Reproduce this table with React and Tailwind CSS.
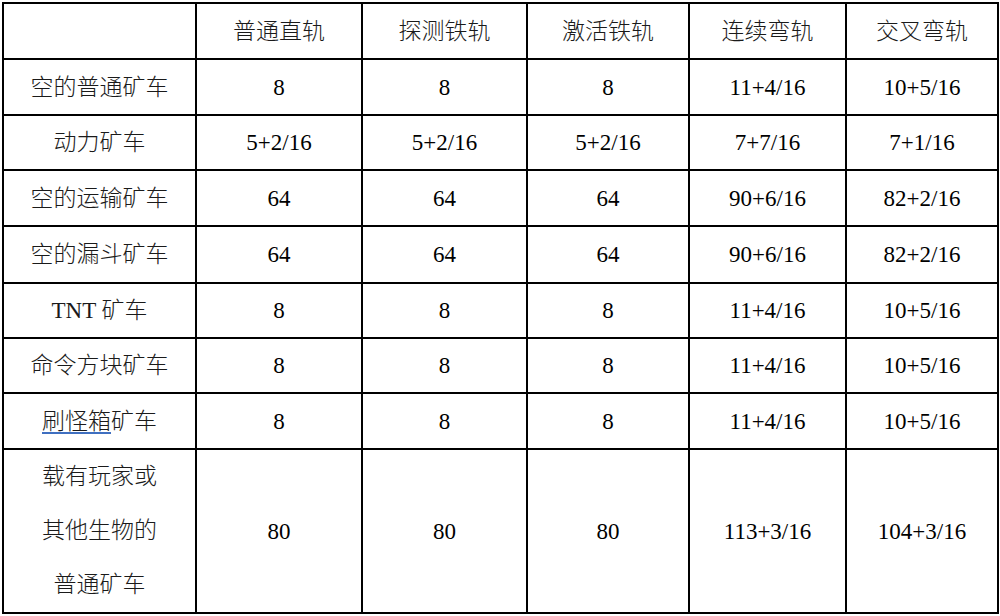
const cols = ["普通直轨", "探测铁轨", "激活铁轨", "连续弯轨", "交叉弯轨"];
const widths = ["w-[193px]", "w-[166px]", "w-[165px]", "w-[162px]", "w-[157px]", "w-[152px]"];

const cell = "border-2 border-black align-middle font-['Liberation_Serif','Noto_Sans_CJK_SC',serif]";
const cn = "font-light text-[#1a1a1a]";

const rows = [
  { label: "空的普通矿车", values: ["8", "8", "8", "11+4/16", "10+5/16"], h: "h-[56px]" },
  { label: "动力矿车", values: ["5+2/16", "5+2/16", "5+2/16", "7+7/16", "7+1/16"], h: "h-[55px]" },
  { label: "空的运输矿车", values: ["64", "64", "64", "90+6/16", "82+2/16"], h: "h-[56px]" },
  { label: "空的漏斗矿车", values: ["64", "64", "64", "90+6/16", "82+2/16"], h: "h-[57px]" },
  { label: "TNT 矿车", values: ["8", "8", "8", "11+4/16", "10+5/16"], h: "h-[55px]" },
  { label: "命令方块矿车", values: ["8", "8", "8", "11+4/16", "10+5/16"], h: "h-[55px]" },
  {
    label: (
      <>
        <span className="underline decoration-[#3f6fc0] decoration-[1.5px] underline-offset-[3px]">刷怪箱</span>矿车
      </>
    ),
    values: ["8", "8", "8", "11+4/16", "10+5/16"],
    h: "h-[56px]",
  },
];

export default function App() {
  return (
    <div className="w-[1000px] h-[616px] bg-white pt-[2px] pl-[2px] text-black font-['Liberation_Serif','Noto_Sans_CJK_SC',serif]">
      <table className="border-collapse table-fixed text-[23px] leading-none text-center text-black font-['Liberation_Serif','Noto_Sans_CJK_SC',serif]">
        <colgroup>
          {widths.map((w, i) => (
            <col key={i} className={w} />
          ))}
        </colgroup>
        <tbody>
          <tr className="h-[56px]">
            <td className={cell}></td>
            {cols.map((c) => (
              <td key={c} className={cell + " " + cn}>
                {c}
              </td>
            ))}
          </tr>
          {rows.map((r, i) => (
            <tr key={i} className={r.h}>
              <td className={cell + " " + cn}>{r.label}</td>
              {r.values.map((v, j) => (
                <td key={j} className={cell}>
                  {v}
                </td>
              ))}
            </tr>
          ))}
          <tr className="h-[164px]">
            <td className={cell + " " + cn + " leading-[54px]"}>
              载有玩家或
              <br />
              其他生物的
              <br />
              普通矿车
            </td>
            {["80", "80", "80", "113+3/16", "104+3/16"].map((v, j) => (
              <td key={j} className={cell}>
                {v}
              </td>
            ))}
          </tr>
        </tbody>
      </table>
    </div>
  );
}
